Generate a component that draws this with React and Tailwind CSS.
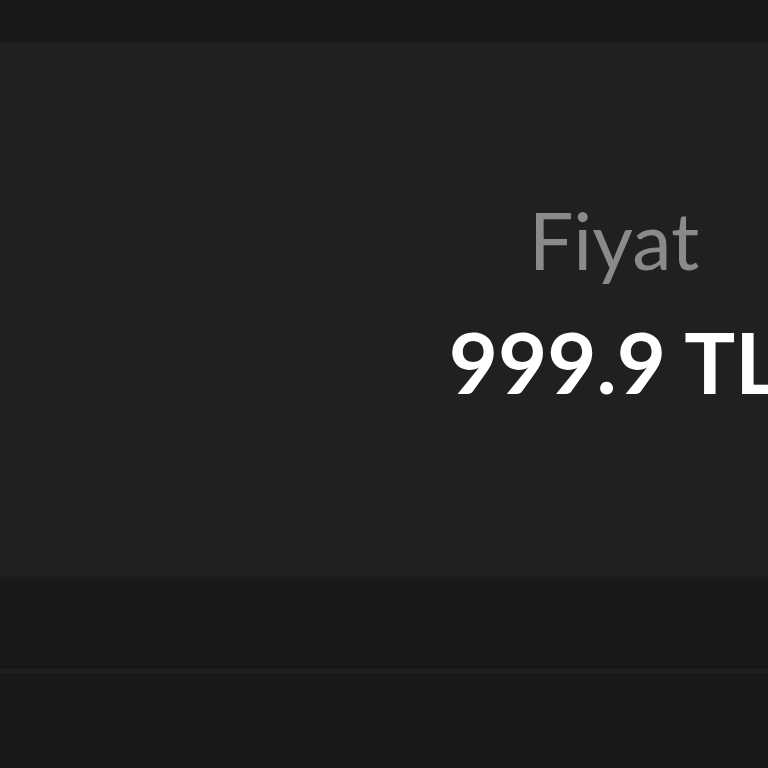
export default function App() {
  return (
    <div className="w-[768px] h-[768px] overflow-hidden bg-[#191919] flex flex-col" style={{ fontFamily: "Lato, 'Open Sans', sans-serif" }}>
      <div className="h-[43px] bg-[#191919] shrink-0" />
      <div className="h-[532px] bg-[#202020] shrink-0 flex justify-end">
        <div className="w-[340px] -mr-[16px] shrink-0 flex flex-col items-center pt-[157px]">
          <p className="text-[#8a8a8a] text-[79px] leading-none whitespace-nowrap">Fiyat</p>
          <p className="text-white text-[85px] font-bold leading-none whitespace-nowrap mt-[40px]">999.9 TL</p>
        </div>
      </div>
      <div className="h-[6px] bg-gradient-to-b from-[#202020] to-[#191919] shrink-0" />
      <div className="h-[84px] bg-[#191919] shrink-0" />
      <div className="h-[4px] bg-[#161616] shrink-0" />
      <div className="h-[4px] bg-[#1f1f1f] shrink-0" />
      <div className="flex-1 bg-[#191919]" />
    </div>
  );
}
